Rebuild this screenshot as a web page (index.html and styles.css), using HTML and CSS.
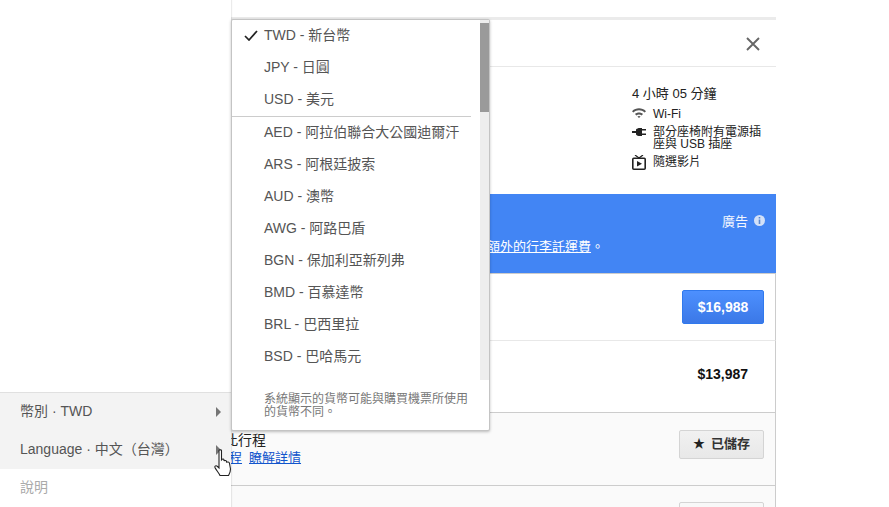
FILE: index.html
```html
<!DOCTYPE html>
<html lang="zh-Hant">
<head>
    <meta charset="UTF-8">
    <meta name="viewport" content="width=device-width, initial-scale=1.0">
    <title>航班</title>
    <link rel="stylesheet" href="styles.css">
</head>
<body>

    <div class="panel">
        <div class="panel-head">
            <svg class="close-icon" width="14" height="14" viewBox="0 0 14 14"><path d="M1 1L13 13M13 1L1 13" stroke="#666" stroke-width="1.9" fill="none"/></svg>
        </div>

        <div class="details">
            <ul class="amenities">
                <li class="duration">4 小時 05 分鐘</li>
                <li class="amenity amenity-wifi">
                    <svg width="14" height="10" viewBox="0 0 14 10"><path d="M0 3.2C4 -0.6 10 -0.6 14 3.2L12.6 4.6C9.4 1.6 4.6 1.6 1.4 4.6ZM3 6C5.2 4 8.8 4 11 6L9.6 7.4C8.2 6.1 5.8 6.1 4.4 7.4ZM5.4 8.4C6.2 7.7 7.8 7.7 8.6 8.4L7 10Z" fill="#555"/></svg>
                    <span>Wi-Fi</span>
                </li>
                <li class="amenity amenity-power">
                    <svg width="14" height="8" viewBox="0 0 14 8"><path d="M0 3H4V5H0ZM4 1.5C5 .5 6 0 8 0H10V8H8C6 8 5 7.5 4 6.5ZM10 1H14V2.5H10ZM10 5.5H14V7H10Z" fill="#222"/></svg>
                    <span>部分座椅附有電源插座與 USB 插座</span>
                </li>
                <li class="amenity amenity-video">
                    <svg width="14" height="15" viewBox="0 0 14 15"><path d="M3 0L7 3L11 0" stroke="#222" stroke-width="1.2" fill="none"/><rect x=".8" y="3.3" width="12.4" height="10.9" rx="1" stroke="#222" stroke-width="1.6" fill="none"/><path d="M5 6L10 8.8L5 11.6Z" fill="#222"/></svg>
                    <span>隨選影片</span>
                </li>
            </ul>
        </div>

        <div class="promo">
            <div class="promo-ad">
                <span>廣告</span>
                <svg width="11" height="11" viewBox="0 0 11 11"><circle cx="5.5" cy="5.5" r="5.5" fill="#d3e1f8"/><path d="M4.7 2H6.3V3.5H4.7ZM4.7 4.6H6.3V9H4.7Z" fill="#5a87d0"/></svg>
            </div>
            <div class="promo-note">收取<a href="#">額外的行李託運費</a>。</div>
        </div>

        <div class="fare-row fare-first">
            <button class="btn-price">$16,988</button>
        </div>
        <div class="fare-row fare-second">
            <b class="price">$13,987</b>
        </div>

        <div class="trip-row">
            <div class="trip-text">
                <div class="trip-title">此行程</div>
                <div class="trip-links"><a href="#">行程</a><a href="#">瞭解詳情</a></div>
            </div>
            <button class="btn-saved"><span class="star">★</span>已儲存</button>
        </div>
        <div class="trip-row trip-next">
            <button class="btn-save"></button>
        </div>
    </div>

    <div class="side">
        <div class="side-menu">
            <div class="side-item side-open">
                <span>幣別 · TWD</span><i class="arrow"></i>
            </div>
            <div class="side-item side-open">
                <span>Language · 中文（台灣）</span><i class="arrow"></i>
            </div>
            <div class="side-item side-help"><span>說明</span></div>
        </div>
    </div>

    <div class="currency">
        <div class="currency-list">
            <div class="currency-item"><svg class="check" width="14" height="11" viewBox="0 0 14 11"><path d="M1 6L5 10L13 1" stroke="#222" stroke-width="1.7" fill="none"/></svg>TWD - 新台幣</div>
            <div class="currency-item">JPY - 日圓</div>
            <div class="currency-item currency-last">USD - 美元</div>
            <div class="currency-item">AED - 阿拉伯聯合大公國迪爾汗</div>
            <div class="currency-item">ARS - 阿根廷披索</div>
            <div class="currency-item">AUD - 澳幣</div>
            <div class="currency-item">AWG - 阿路巴盾</div>
            <div class="currency-item">BGN - 保加利亞新列弗</div>
            <div class="currency-item">BMD - 百慕達幣</div>
            <div class="currency-item">BRL - 巴西里拉</div>
            <div class="currency-item">BSD - 巴哈馬元</div>
            <div class="scroll-track"><div class="scroll-thumb"></div></div>
        </div>
        <p class="currency-note">系統顯示的貨幣可能與購買機票所使用的貨幣不同。</p>
    </div>

    <svg class="hand" width="18" height="28" viewBox="0 0 18 28"><path d="M5 1.500C5 .5 7.500 .5 7.500 1.500V11L8 10.500C8.500 9.500 10 10 10 11V12C10.500 11 12.500 11.500 12.500 12.500V13.500C13 12.500 15.500 13 15.500 14.500L16.500 20C16.500 23 15.500 24.500 14.500 26.500H6C5 24 2 21 1 18.500C.5 17 2 16 3.500 17.500L5 19Z" fill="#fff" stroke="#222" stroke-width="1.100"/></svg>

</body>
</html>
```

FILE: styles.css
```css
html, body {
    height: 100%;
}

body {
    margin: 0;
    overflow: hidden;
    position: relative;
    background: #fff;
    color: #222;
    font-family: "Liberation Sans", "Noto Sans CJK TC", sans-serif;
    font-size: 13px;
}

a {
    color: inherit;
}

/* results panel */
.panel {
    width: 545px;
    margin: 17px 0 0 231px;
    border-top: 3px solid #ebebeb;
}

.panel-head {
    display: flex;
    justify-content: flex-end;
    align-items: center;
    height: 46px;
    padding-right: 16px;
    border-bottom: 1px solid #e8e8e8;
}

.close-icon {
    margin-top: 1px;
}

.details {
    height: 127px;
    padding-left: 401px;
    box-sizing: border-box;
}

.amenities {
    list-style: none;
    margin: 0;
    padding: 19px 0 0;
    width: 132px;
}

.duration {
    font-size: 13px;
    line-height: 15px;
    color: #222;
}

.amenity {
    display: flex;
    align-items: flex-start;
    gap: 7px;
    font-size: 12px;
    line-height: 12px;
    color: #222;
}

.amenity svg {
    flex: none;
}

.amenity-wifi {
    margin-top: 7px;
}

.amenity-wifi svg {
    margin-top: 0;
}

.amenity-power {
    margin-top: 6px;
}

.amenity-power svg {
    margin-top: 2px;
}

.amenity-video {
    margin-top: 5px;
}

.amenity-video span {
    margin-top: 1px;
}

.promo {
    height: 80px;
    box-sizing: border-box;
    padding-top: 19px;
    background: #4285f4;
    border-bottom: 1px solid #ccc;
    color: #fff;
}

.promo-ad {
    display: flex;
    justify-content: flex-end;
    align-items: center;
    gap: 6px;
    padding-right: 11px;
    height: 14px;
    color: #f2f6fe;
}

.promo-note {
    margin-top: 12px;
    padding-left: 230px;
    line-height: 15px;
}

.fare-row {
    display: flex;
    justify-content: flex-end;
    align-items: center;
    border-right: 1px solid #ccc;
    box-sizing: border-box;
}

.fare-first {
    height: 67px;
    padding-right: 11px;
    border-bottom: 1px solid #e8e8e8;
}

.fare-second {
    height: 72px;
    padding-right: 27px;
    padding-bottom: 6px;
    border-bottom: 1px solid #ccc;
}

.btn-price {
    width: 82px;
    height: 34px;
    padding: 0;
    border: 1px solid #3079ed;
    border-radius: 2px;
    background: linear-gradient(#4d90fe, #3b78e7);
    color: #fff;
    font: bold 14px "Liberation Sans", sans-serif;
}

.price {
    font-size: 14px;
    color: #111;
}

.trip-row {
    display: flex;
    justify-content: space-between;
    align-items: flex-start;
    height: 73px;
    box-sizing: border-box;
    padding: 17px 11px 0 0;
    background: #fafafa;
    border-right: 1px solid #ccc;
    border-bottom: 1px solid #ccc;
}

.trip-text {
    margin: 1px 0 0 -7px;
}

.trip-title {
    font-size: 14px;
    line-height: 18px;
    color: #222;
}

.trip-links {
    display: flex;
    gap: 7px;
    margin: 1px 0 0 -8px;
    font-size: 13px;
    line-height: 16px;
    color: #15c;
}

.btn-saved {
    width: 85px;
    height: 29px;
    padding: 0 0 5px;
    border: 1px solid #d4d4d4;
    border-radius: 2px;
    background: linear-gradient(#f1f1f1, #e8e8e8);
    color: #333;
    font: bold 13px "Liberation Sans", "Noto Sans CJK TC", sans-serif;
}

.star {
    margin-right: 6px;
    font-size: 12px;
    color: #222;
}

.trip-next {
    justify-content: flex-end;
    padding-top: 16px;
}

.btn-save {
    width: 85px;
    height: 29px;
    padding: 0;
    border: 1px solid #d4d4d4;
    border-radius: 2px;
    background: #f8f8f8;
}

/* left menu, lies over the panel */
.side {
    position: absolute;
    left: 0;
    top: 0;
    bottom: 0;
    width: 231px;
    display: flex;
    flex-direction: column;
    justify-content: flex-end;
    background: #fff;
    box-shadow: 1px 0 1px rgba(0, 0, 0, 0.08);
}

.side-menu {
    height: 115px;
    box-sizing: border-box;
    border-top: 1px solid #e0e0e0;
}

.side-item {
    display: flex;
    justify-content: space-between;
    align-items: center;
    height: 38px;
    padding: 0 10px 0 20px;
    color: #555;
    font-size: 14px;
}

.side-item span {
    margin-top: -5px;
}

.side-open {
    background: #f3f3f3;
}

.side-help {
    color: #aaa;
}

.arrow {
    width: 0;
    height: 0;
    border-left: 5px solid #757575;
    border-top: 5px solid transparent;
    border-bottom: 5px solid transparent;
}

/* currency popup */
.currency {
    position: absolute;
    left: 231px;
    top: 19px;
    width: 257px;
    height: 410px;
    background: #fff;
    border: 1px solid #c4c4c4;
    border-radius: 2px;
    box-shadow: 0 1px 3px rgba(0, 0, 0, 0.25);
}

.currency-list {
    position: relative;
    height: 360px;
    padding-right: 18px;
}

.currency-item {
    position: relative;
    height: 32px;
    padding-left: 32px;
    line-height: 30px;
    font-size: 14px;
    color: #555;
    white-space: nowrap;
}

.currency-last {
    height: 33px;
    border-bottom: 1px solid #ccc;
    box-sizing: border-box;
}

.check {
    position: absolute;
    left: 12px;
    top: 10px;
}

.scroll-track {
    position: absolute;
    right: 0;
    top: 0;
    width: 9px;
    height: 360px;
    background: #eee;
}

.scroll-thumb {
    height: 89px;
    margin-top: 3px;
    background: #9a9a9a;
}

.currency-note {
    margin: 13px 20px 0 32px;
    font-size: 12px;
    line-height: 13px;
    color: #777;
}

.hand {
    position: absolute;
    left: 214px;
    top: 449px;
}
```
